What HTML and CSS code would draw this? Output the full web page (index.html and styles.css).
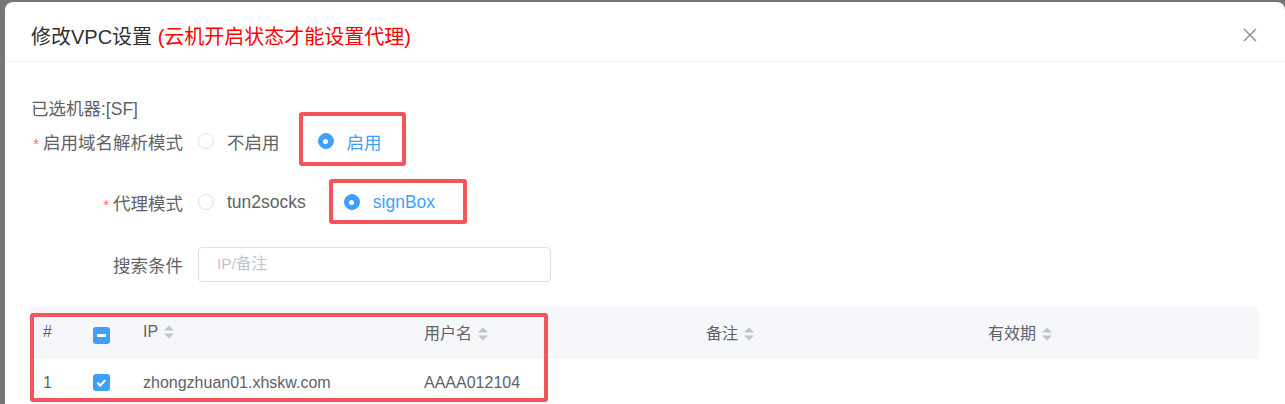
FILE: index.html
```html
<!DOCTYPE html>
<html lang="zh-CN">
<head>
    <meta charset="UTF-8">
    <meta name="viewport" content="width=device-width, initial-scale=1.0">
    <title>修改VPC设置</title>
    <link rel="stylesheet" href="styles.css">
</head>
<body>
<div class="dialog">
    <div class="dialog-header">
        <div class="dialog-title">修改VPC设置 <span class="title-warn">(云机开启状态才能设置代理)</span></div>
        <svg class="close-icon" width="14" height="14" viewBox="0 0 14 14">
            <path d="M1 1L13 13M13 1L1 13" stroke="#909399" stroke-width="1.5" fill="none"/>
        </svg>
    </div>
    <div class="dialog-body">
        <div class="selected">已选机器:[SF]</div>

        <!-- 域名解析 -->
        <div class="form-row">
            <div class="form-label"><span class="req">*</span>启用域名解析模式</div>
            <div class="radio-group">
                <label class="radio"><span class="radio-dot"></span><span class="radio-text">不启用</span></label>
                <label class="radio checked"><span class="radio-dot"></span><span class="radio-text">启用</span><span class="mark mark-dns"></span></label>
            </div>
        </div>

        <!-- 代理模式 -->
        <div class="form-row proxy-row">
            <div class="form-label"><span class="req">*</span>代理模式</div>
            <div class="radio-group">
                <label class="radio"><span class="radio-dot"></span><span class="radio-text">tun2socks</span></label>
                <label class="radio checked"><span class="radio-dot"></span><span class="radio-text">signBox</span><span class="mark mark-proxy"></span></label>
            </div>
        </div>

        <div class="form-row search-row">
            <div class="form-label">搜索条件</div>
            <input class="search-input" type="text" placeholder="IP/备注">
        </div>

        <div class="table-wrap">
            <table class="data-table">
                <colgroup>
                    <col style="width: 50px">
                    <col style="width: 50px">
                    <col style="width: 281px">
                    <col style="width: 282px">
                    <col style="width: 282px">
                    <col style="width: 283px">
                </colgroup>
                <thead>
                <tr>
                    <th>#</th>
                    <th><span class="checkbox"><span class="bar"></span></span></th>
                    <th>IP<svg class="caret" width="12" height="16" viewBox="0 0 12 16"><path d="M6 1.5L11 6.5H1Z" fill="#c0c4cc"/><path d="M1 9.5H11L6 14.5Z" fill="#c0c4cc"/></svg></th>
                    <th>用户名<svg class="caret" width="12" height="16" viewBox="0 0 12 16"><path d="M6 1.5L11 6.5H1Z" fill="#c0c4cc"/><path d="M1 9.5H11L6 14.5Z" fill="#c0c4cc"/></svg></th>
                    <th>备注<svg class="caret" width="12" height="16" viewBox="0 0 12 16"><path d="M6 1.5L11 6.5H1Z" fill="#c0c4cc"/><path d="M1 9.5H11L6 14.5Z" fill="#c0c4cc"/></svg></th>
                    <th>有效期<svg class="caret" width="12" height="16" viewBox="0 0 12 16"><path d="M6 1.5L11 6.5H1Z" fill="#c0c4cc"/><path d="M1 9.5H11L6 14.5Z" fill="#c0c4cc"/></svg></th>
                </tr>
                </thead>
                <tbody>
                <tr>
                    <td>1</td>
                    <td><span class="checkbox"><svg width="17" height="17" viewBox="0 0 17 17"><path d="M4.5 8.8L7.3 11.5L12.5 5.8" stroke="#fff" stroke-width="2" fill="none"/></svg></span></td>
                    <td>zhongzhuan01.xhskw.com</td>
                    <td>AAAA012104</td>
                    <td></td>
                    <td></td>
                </tr>
                </tbody>
            </table>
            <span class="mark mark-table"></span>
        </div>
    </div>
</div>
</body>
</html>
```

FILE: styles.css
```css
/* Grundlayout */
html, body {
    margin: 0;
    height: 100%;
    overflow: hidden;
}
body {
    background-color: #767676;
    font-family: "Liberation Sans", "Noto Sans CJK SC", sans-serif;
    color: #606266;
}
.dialog {
    margin: 2px 0 0 5px;
    width: 1280px;
    height: calc(100% - 2px);
    overflow: hidden;
    background-color: #fff;
    border-radius: 8px 8px 0 0;
}
.dialog-header {
    display: flex;
    justify-content: space-between;
    align-items: center;
    height: 59px;
    padding: 0 28px 0 26px;
    border-bottom: 1px solid #f0f0f0;
}
.dialog-title {
    font-size: 20px;
    color: #303133;
    padding-top: 8px;
}
.title-warn {
    color: #ff0000;
}
.close-icon {
    margin-top: 7px;
}
.dialog-body {
    padding: 35px 27px 0 25px;
}
.selected {
    font-size: 17.5px;
    line-height: 24px;
    padding-left: 1px;
}
.form-row {
    display: flex;
    align-items: center;
    height: 40px;
    margin-bottom: 21px;
}
.proxy-row {
    margin-bottom: 22px;
}
.search-row {
    margin-bottom: 0;
}
.form-label {
    width: 153px;
    padding-right: 15px;
    text-align: right;
    font-size: 17.5px;
}
.req {
    color: #f56c6c;
    margin-right: 4px;
    font-size: 15px;
}
.radio-group {
    display: flex;
    align-items: center;
}
.radio {
    position: relative;
    display: flex;
    align-items: center;
    height: 24px;
    margin-right: 38px;
    font-size: 17.5px;
    cursor: pointer;
}
.radio-dot {
    width: 16px;
    height: 16px;
    box-sizing: border-box;
    border: 1px solid #dcdfe6;
    border-radius: 50%;
    background-color: #fff;
    margin-right: 13px;
}
.radio.checked .radio-dot {
    border-color: #409eff;
    background-color: #409eff;
    display: flex;
    justify-content: center;
    align-items: center;
}
.radio.checked .radio-dot::after {
    content: "";
    width: 5px;
    height: 5px;
    border-radius: 50%;
    background-color: #fff;
}
.radio.checked .radio-text {
    color: #409eff;
}
.search-input {
    width: 353px;
    height: 35px;
    box-sizing: border-box;
    border: 1px solid #dcdfe6;
    border-radius: 4px;
    padding: 0 18px;
    font-family: inherit;
    font-size: 15.5px;
    color: #606266;
    outline: none;
}
.search-input::placeholder {
    color: #c0c4cc;
}
/* Tabelle */
.table-wrap {
    position: relative;
    margin-top: 23px;
}
.data-table {
    width: 1228px;
    border-collapse: collapse;
    table-layout: fixed;
    font-size: 16px;
}
.data-table th {
    height: 50px;
    padding: 0 13px;
    text-align: left;
    font-weight: normal;
    background-color: #f5f7fa;
    border-bottom: 1px solid #ebeef5;
}
.data-table td {
    height: 50px;
    padding: 0 13px;
    text-align: left;
}
.data-table th, .data-table td {
    vertical-align: middle;
    white-space: nowrap;
}
.caret {
    vertical-align: -3px;
    margin-left: 5px;
}
.checkbox {
    display: inline-flex;
    justify-content: center;
    align-items: center;
    width: 17px;
    height: 17px;
    border-radius: 3px;
    background-color: #409eff;
    vertical-align: -3px;
}
.checkbox .bar {
    width: 9px;
    height: 3px;
    background-color: #fff;
}
/* Markierungen */
.mark {
    position: absolute;
    box-sizing: border-box;
    border: 4px solid #f5545a;
    border-radius: 3px;
    pointer-events: none;
}
.mark-dns {
    left: -19px;
    right: -24px;
    top: -17px;
    bottom: -13px;
}
.mark-proxy {
    left: -15px;
    right: -32px;
    top: -11px;
    bottom: -10px;
}
.mark-table {
    left: 0;
    top: 6px;
    width: 518px;
    height: 89px;
}
```
